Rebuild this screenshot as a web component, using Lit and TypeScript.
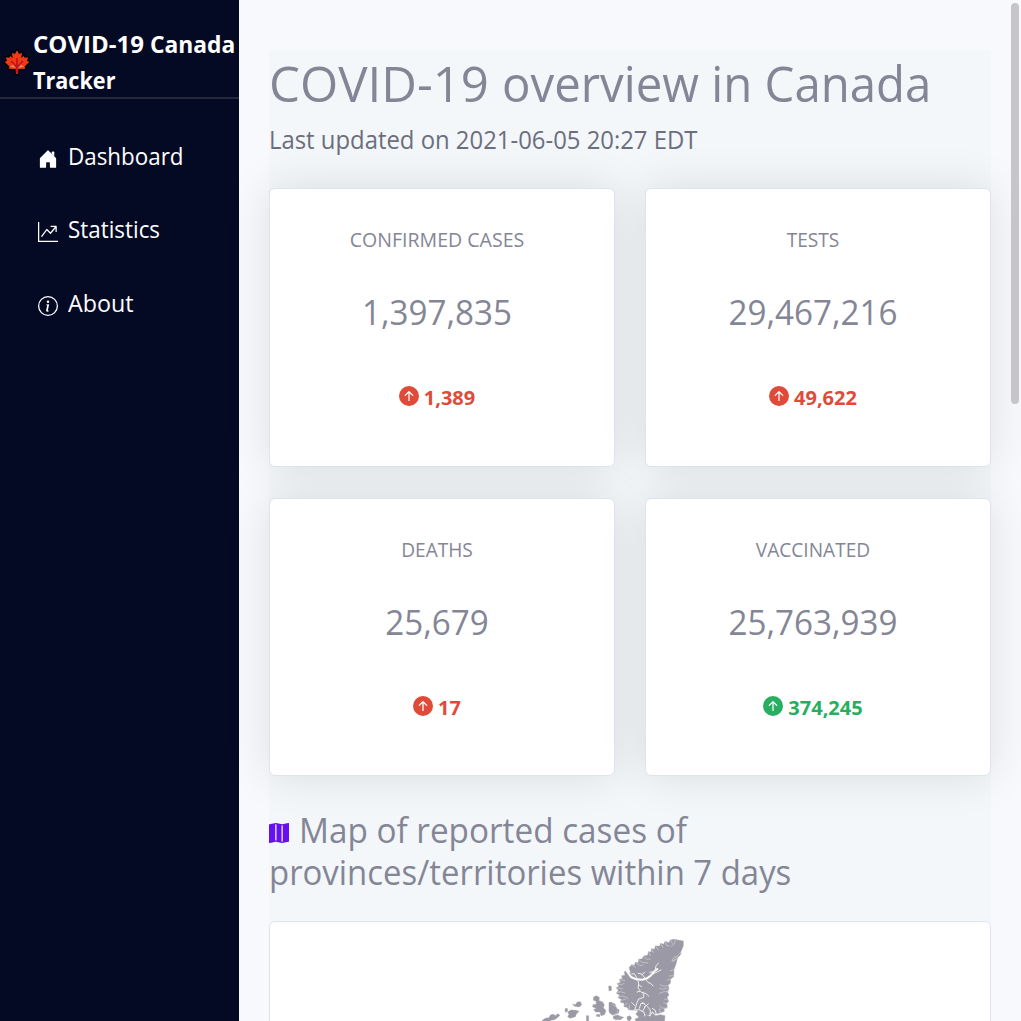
import { LitElement, html, css, svg } from "lit";
import { customElement } from "lit/decorators.js";

const house = svg`<path d="M6.500 10.995V14.500a.5.5 0 0 1-.5.5H2a.5.5 0 0 1-.5-.5v-7a.5.5 0 0 1 .146-.354l6-6a.5.5 0 0 1 .708 0l6 6a.5.5 0 0 1 .146.354v7a.5.5 0 0 1-.5.5h-4a.5.5 0 0 1-.5-.5V11c0-.25-.25-.5-.5-.5H7c-.25 0-.5.25-.5.495z"/><path d="M13 2.500V6l-2-2V2.500a.5.5 0 0 1 .5-.5h1a.5.5 0 0 1 .5.5z"/>`;
const graph = svg`<path fill-rule="evenodd" d="M0 0h1v15h15v1H0V0Zm10 3.500a.5.5 0 0 1 .5-.5h4a.5.5 0 0 1 .5.5v4a.5.5 0 0 1-1 0V4.900l-3.613 4.417a.5.5 0 0 1-.74.037L7.060 6.767l-3.656 5.027a.5.5 0 0 1-.808-.588l4-5.500a.5.5 0 0 1 .758-.06l2.609 2.610L13.445 4H10.500a.5.5 0 0 1-.5-.5Z"/>`;
const info = svg`<path d="M8 15A7 7 0 1 1 8 1a7 7 0 0 1 0 14zm0 1A8 8 0 1 0 8 0a8 8 0 0 0 0 16z"/><path d="m8.930 6.588-2.290.287-.082.380.450.083c.294.070.352.176.288.469l-.738 3.468c-.194.897.105 1.319.808 1.319.545 0 1.178-.252 1.465-.598l.088-.416c-.2.176-.492.246-.686.246-.275 0-.375-.193-.304-.533L8.930 6.588zM9 4.500a1 1 0 1 1-2 0 1 1 0 0 1 2 0z"/>`;
const arrow = svg`<path d="M16 8A8 8 0 1 0 0 8a8 8 0 0 0 16 0zm-7.500 3.500a.5.5 0 0 1-1 0V5.707L5.354 7.854a.5.5 0 1 1-.708-.708l3-3a.5.5 0 0 1 .708 0l3 3a.5.5 0 0 1-.708.708L8.500 5.707V11.500z"/>`;
const map = svg`<path fill-rule="evenodd" d="M16 .5a.5.5 0 0 0-.598-.490L10.500.990 5.598.010a.5.5 0 0 0-.196 0l-5 1A.5.5 0 0 0 0 1.500v14a.5.5 0 0 0 .598.490l4.902-.980 4.902.980a.502.502 0 0 0 .196 0l5-1A.5.5 0 0 0 16 14.500V.5zM5 14.090V1.110l.5-.1.5.1v12.980l-.402-.080a.498.498 0 0 0-.196 0L5 14.090zm5 .8V1.910l.402.080a.5.5 0 0 0 .196 0L11 1.910v12.980l-.5.1-.5-.1z"/>`;

const icon = (shape: unknown, name = "") => html`<svg class="icon ${name}" viewBox="0 0 16 16" aria-hidden="true">${shape}</svg>`;

const leaf = html`<svg class="leaf" viewBox="1 1.200 24 24" aria-hidden="true">
  <path d="M13 2.300 14.900 5.900 17.600 4.600 17 9.400 19.200 7.600 20 9.300 23.300 8.900 22.200 12 24.300 13.300 20 17.300 20.600 19.500 14.200 19.600 14 24.200H12L11.800 19.600 5.400 19.500 6 17.300 1.700 13.300 3.800 12 2.700 8.900 6 9.300 6.800 7.600 9 9.400 8.400 4.600 11.100 5.900z" fill="#f03a17" stroke="#000" stroke-width="2.600" stroke-linejoin="round" paint-order="stroke"/>
  <path d="M6.500 17.800 10 15 12 18.500zM19.500 17.800 16 15 14 18.500z" fill="#ff7b50"/>
  <path d="M13 9.500V24M13 18.300 7.600 12.300M13 18.300 18.400 12.300" fill="none" stroke="#bd1021" stroke-width="1.500"/>
</svg>`;

const arctic = html`<svg class="arctic" viewBox="0 0 720 399" aria-hidden="true">
  <g transform="translate(335 8) scale(.33333)">
    <path class="land" d="M72 113 80 104 88 106 91 97 100 98 101 88 112 86 116 78 128 76 130 65 139 66 138 56 149 58 151 47 164 49 166 40 176 43 180 34 192 38 196 30 209 28 222 31 235 33 235 47 230 60 226 68 218 82 213 102 207 118 206 140 197 147 196 160 189 166 192 175 187 185 192 195 186 202 191 214 185 220 187 232 177 236 178 244 165 249 150 252 142 244 134 254 120 258 110 247 100 249 96 241 82 240 72 240 66 232 57 230 57 219 46 217 49 208 39 203 44 195 34 190 40 182 34 173 42 168 36 161 47 157 43 148 52 146 50 137 60 136 58 125 66 121 71 127 78 130z"/>
    <path class="land" d="M229 68 224 77 215 86 204 94 214 82 222 72zM92 252 100 244 112 244 120 255 135 258 142 249 152 257 166 254 180 257 178 280 96 280 90 268 102 262zM14 170 20 171 19 179 14 181zM14 222 22 218 30 222 34 234 43 240 40 250 30 253 18 250 13 238zM66 260 75 257 80 264 74 273 67 270zM28 264 43 258 56 262 46 269 30 269z"/>
    <path class="water wide" d="M62 119 69 128 78 141 94 148 112 149 126 145 137 137 148 124 157 117"/>
    <path class="water" d="M98 149 101 162 99 174 107 185 116 191 116 202 101 207 96 218 89 240M121 148 129 157 138 161 144 168M112 187 123 191 132 199M104 184 96 186M137 136 152 128 168 120M150 124 153 107 161 99M147 125 134 127M122 148 111 132 100 130M111 135 119 126M97 147 88 131 80 132M100 164 110 170M89 240 103 239 118 248 119 258M113 244 122 226 112 216M118 232 130 222M103 235 108 220 118 221M89 226 80 218M135 258 136 240 127 230M154 252 150 240 142 235"/>
    <path class="inlet" d="M80 104 91 112M91 97 104 107 113 105M101 88 111 97 128 99M115 79 126 88 136 87M130 65 137 77M139 57 145 67M152 48 160 60M167 40 174 52M181 35 184 46 193 48M197 30 202 40M212 29 207 43 199 49M219 79 207 82 201 91M215 86 202 94M207 119 196 122M206 137 193 138M197 147 187 151M190 166 177 169 165 164M187 174 172 178 164 175M192 185 177 185 163 190M191 211 179 207M187 222 177 218M184 235 170 234 164 228M166 249 164 236M45 149 59 152M37 162 50 164 57 160M34 174 52 176M34 188 47 185 60 189M40 201 53 198 69 205M48 211 61 208M58 226 67 220M73 239 73 225"/>
  </g>
  <g transform="translate(265 48) scale(.33333)">
    <path class="land" d="M10 170 22 151 31 145 42 143 46 135 55 133 62 137 68 131 75 136 66 144 58 149 48 151 39 158 36 170zM90 116 97 115 98 124 91 127zM98 126 108 120 122 121 132 124 124 132 121 140 105 145 98 140 102 133zM112 103 121 104 127 96 136 95 140 104 133 111 119 109zM154 137 161 137 161 156 155 156zM176 81 184 77 193 82 192 92 202 95 208 104 205 113 213 122 208 134 198 137 195 126 182 126 176 119 184 115 173 111 174 104 184 103 183 93 175 91zM184 134 194 133 195 140 184 139zM222 97 231 97 234 107 243 110 247 124 240 133 231 135 222 126zM235 138 248 135 257 140 250 146 235 146zM221 48 228 48 229 61 222 63z"/>
  </g>
</svg>`;

const cards = [
  { label: "CONFIRMED CASES", fit: "", total: "1,397,835", change: "1,389", tone: "bad" },
  { label: "TESTS", fit: "tight", total: "29,467,216", change: "49,622", tone: "bad" },
  { label: "DEATHS", fit: "tight", total: "25,679", change: "17", tone: "bad" },
  { label: "VACCINATED", fit: "tight", total: "25,763,939", change: "374,245", tone: "good" },
];

@customElement("app-root")
export class AppRoot extends LitElement {
  static styles = css`
    :host { display: block; height: 100vh; overflow: hidden; font-family: "Open Sans", sans-serif; background: #f8f9fd; color: #848696; }
    * { box-sizing: border-box; }
    .page { display: flex; height: 100%; position: relative; }
    .side { width: 239px; flex: none; background: #050a24; color: #fff; }
    .brand { height: 99px; padding: 27px 0 0 4px; border-bottom: 2px solid #24283f; display: flex; align-items: center; }
    .leaf { width: 26px; height: 26px; flex: none; margin-right: 3px; overflow: visible; }
    .name { font-size: 24px; line-height: 36px; font-weight: 700; white-space: nowrap; width: 202px; }
    .name span, .link span, h1 span, h2 span { display: inline-block; transform-origin: 0 50%; }
    .name .second { transform: scaleX(.95); }
    .name .third { transform: scaleX(.9); }
    .nav { padding: 39px 0 0 38px; }
    .link { height: 73.4px; display: flex; align-items: flex-start; font-size: 24px; line-height: 36px; }
    .link span { transform: scaleX(.933); }
    .link:last-child span { transform: scaleX(.97); }
    .nav .icon { margin: 11px 10px 0 0; }
    .icon { width: 20px; height: 20px; fill: currentColor; flex: none; }
    .content { margin: 50px 0 0 30px; width: 722px; flex: none; background: #f3f7fa; }
    h1, h2, p { margin: 0; font-weight: 400; white-space: nowrap; }
    h1 { font-size: 50px; line-height: 60px; padding-top: 3px; }
    h1 .lead { transform: scaleX(.983); }
    h1 .rest { transform: translateX(-4px) scaleX(.947); }
    .updated { font-size: 25px; line-height: 30px; margin-top: 11px; color: #6c6e7d; transform: scaleX(.955); transform-origin: 0 50%; }
    .cards { display: grid; grid-template-columns: 346px 346px; gap: 31px 30px; margin-top: 34px; }
    .card { height: 278.5px; padding-right: 10px; background: #fff; border: 1px solid #dfe3ee; border-radius: 6px; text-align: center; box-shadow: 0 0 46px rgba(0, 0, 0, .11); }
    .label { font-size: 20px; line-height: 30px; margin-top: 36px; transform: scaleX(.977); }
    .tight { transform: scaleX(.955); }
    .total { font-size: 35px; line-height: 42px; margin-top: 36px; transform: scaleX(.948); }
    .change { font-size: 20px; line-height: 30px; margin-top: 50px; font-weight: 700; display: flex; justify-content: center; align-items: center; gap: 5px; }
    .change .icon { margin-bottom: 4px; }
    .bad { color: #e04b39; }
    .good { color: #27ae60; }
    h2 { font-size: 35px; line-height: 42px; margin-top: 33px; }
    h2 .first { transform: scaleX(.951); }
    h2 .next { transform: scaleX(.94); }
    .purple { color: #6610f2; margin-right: 10px; }
    .mapcard { height: 401px; margin-top: 28px; background: #fff; border: 1px solid #dfe3ee; border-radius: 6px; overflow: hidden; }
    .arctic { display: block; width: 720px; height: 399px; }
    .land { fill: #9b99a5; stroke: #d3d1cd; stroke-width: 2.5px; stroke-linejoin: round; paint-order: stroke; }
    .water, .inlet { fill: none; stroke: #f4f3f1; stroke-width: 2.8px; stroke-linecap: round; stroke-linejoin: round; }
    .wide { stroke: #fff; stroke-width: 6px; }
    .inlet { stroke: #cfcdce; stroke-width: 2.2px; }
    .bar { position: absolute; right: 2px; top: 3px; width: 8px; height: 401px; border-radius: 4px; background: #c6c6c8; }
  `;
  render() {
    return html`<div class="page">
      <aside class="side">
        <div class="brand">${leaf}<div class="name">COVID-19 <span class="second">Canada</span><br /><span class="third">Tracker</span></div></div>
        <nav class="nav">
          <div class="link">${icon(house)}<span>Dashboard</span></div>
          <div class="link">${icon(graph)}<span>Statistics</span></div>
          <div class="link">${icon(info)}<span>About</span></div>
        </nav>
      </aside>
      <main class="content">
        <h1><span class="lead">COVID-19</span> <span class="rest">overview in Canada</span></h1>
        <p class="updated">Last updated on 2021-06-05 20:27 EDT</p>
        <section class="cards">${cards.map((c) => html`<article class="card">
          <p class="label ${c.fit}">${c.label}</p><p class="total">${c.total}</p>
          <div class="change ${c.tone}">${icon(arrow)}<span>${c.change}</span></div></article>`)}
        </section>
        <h2>${icon(map, "purple")}<span class="first">Map of reported cases of</span><br /><span class="next">provinces/territories within 7 days</span></h2>
        <div class="mapcard">${arctic}</div>
      </main>
      <div class="bar"></div>
    </div>`;
  }
}
